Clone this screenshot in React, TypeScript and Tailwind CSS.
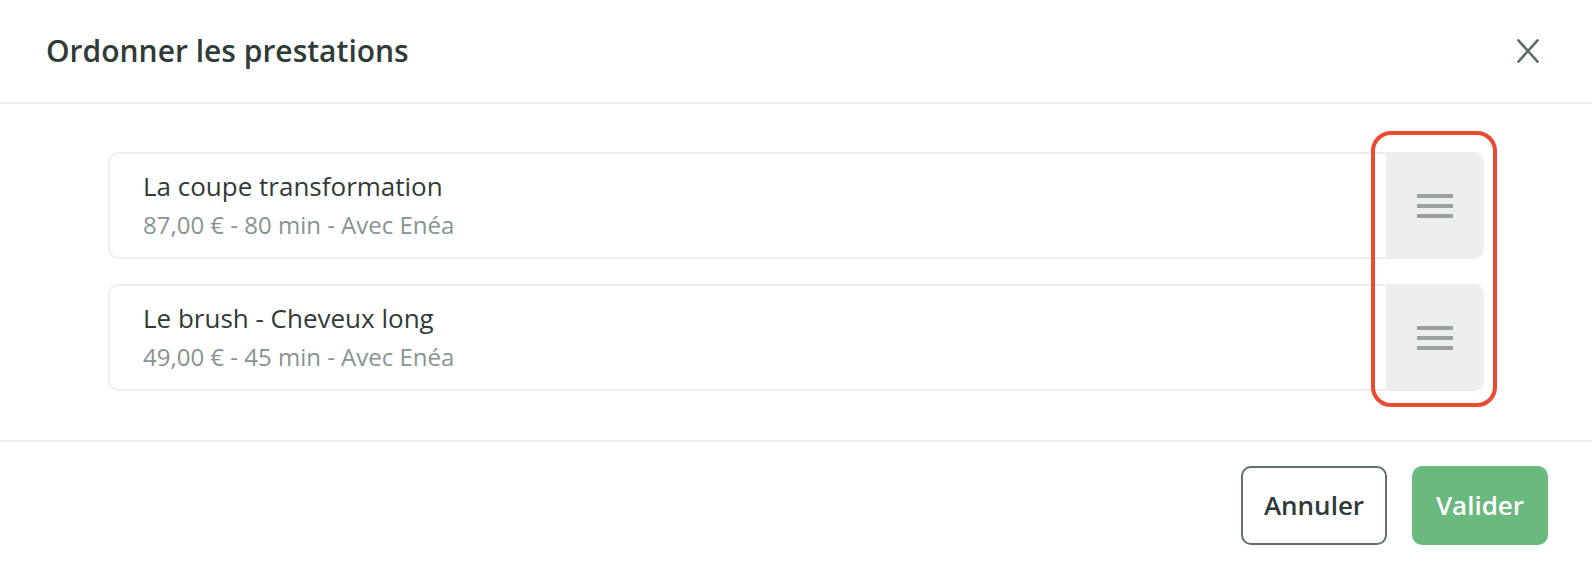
import React from "react";

type Prestation = { id: number; name: string; details: string };

const prestations: Prestation[] = [
  { id: 1, name: "La coupe transformation", details: "87,00 € - 80 min - Avec Enéa" },
  { id: 2, name: "Le brush - Cheveux long", details: "49,00 € - 45 min - Avec Enéa" },
];

function DragHandle() {
  return (
    <div className="flex flex-col gap-[6px]">
      <span className="block h-[4px] w-[36px] bg-[#9aa29e]" />
      <span className="block h-[4px] w-[36px] bg-[#9aa29e]" />
      <span className="block h-[4px] w-[36px] bg-[#9aa29e]" />
    </div>
  );
}

function PrestationRow({ p }: { p: Prestation }) {
  return (
    <div className="flex">
      <div className="flex-1 rounded-l-[10px] border-2 border-r-0 border-[#eeeeee] pl-[33px] pt-[14px] pb-[16px]">
        <div className="text-[26px] leading-[36px] text-[#2f3b37]">{p.name}</div>
        <div className="mt-[5px] text-[24px] leading-[32px] text-[#869490]">{p.details}</div>
      </div>
      <div className="flex w-[98px] items-center justify-center rounded-r-[10px] bg-[#eeeeee]">
        <DragHandle />
      </div>
    </div>
  );
}

export default function App() {
  return (
    <div className="relative h-[566px] w-[1592px] overflow-hidden bg-white font-['Open_Sans',sans-serif]">
      <header className="flex h-[104px] items-center justify-between border-b-2 border-[#eeeeee] pl-[46px] pr-[53px]">
        <h1 className="text-[30px] font-semibold leading-[40px] text-[#2f3b37]">Ordonner les prestations</h1>
        <button type="button" className="flex h-[24px] w-[22px] items-center justify-center text-[#5b6b66]">
          <svg width="22" height="24" viewBox="0 0 22 24" fill="none" stroke="currentColor" strokeWidth="2.6" strokeLinecap="square">
            <path d="M1.5 1.5 L20.5 22.5" />
            <path d="M20.5 1.5 L1.5 22.5" />
          </svg>
        </button>
      </header>

      <main className="flex flex-col gap-[25px] px-[108px] pt-[48px] pb-[49px]">
        {prestations.map((p) => (
          <PrestationRow key={p.id} p={p} />
        ))}
      </main>

      <footer className="flex justify-end gap-[25px] border-t-2 border-[#eeeeee] pt-[24px] pr-[44px]">
        <button
          type="button"
          className="flex h-[79px] w-[146px] items-center justify-center rounded-[10px] border-2 border-[#5f6f6a] text-[26px] font-semibold text-[#2f3b37]"
        >
          Annuler
        </button>
        <button
          type="button"
          className="flex h-[79px] w-[136px] items-center justify-center rounded-[10px] bg-[#6ab97f] text-[26px] font-semibold text-white"
        >
          Valider
        </button>
      </footer>

      <div className="pointer-events-none absolute left-[1371px] top-[131px] h-[276px] w-[126px] rounded-[20px] border-4 border-[#ea4a2f]" />
    </div>
  );
}
